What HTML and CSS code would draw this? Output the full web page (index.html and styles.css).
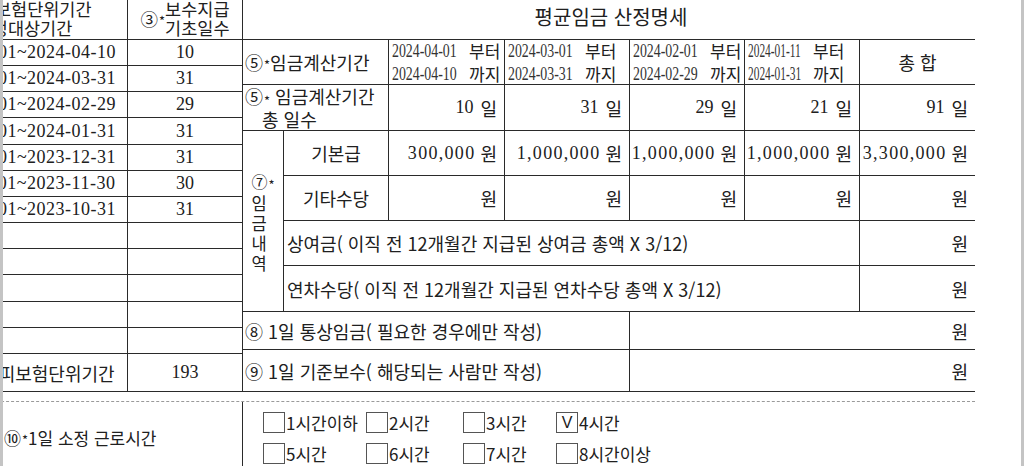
FILE: index.html
```html
<!DOCTYPE html>
<html lang="ko">
<head>
<meta charset="utf-8">
<title>평균임금 산정명세</title>
<link rel="stylesheet" href="styles.css">
</head>
<body>
<div class="viewport">
  <div class="page">
    <div class="top">
      <div class="left">
        <div class="c h col1">② 피보험단위기간<br>산정대상기간</div>
        <div class="c h col2">③<span class="ast">*</span> 보수지급<br>기초일수</div>
        <div class="c col1 num">2024-04-01~2024-04-10</div><div class="c col2 num">10</div>
        <div class="c col1 num">2024-03-01~2024-03-31</div><div class="c col2 num">31</div>
        <div class="c col1 num">2024-02-01~2024-02-29</div><div class="c col2 num">29</div>
        <div class="c col1 num">2024-01-01~2024-01-31</div><div class="c col2 num">31</div>
        <div class="c col1 num">2023-12-01~2023-12-31</div><div class="c col2 num">31</div>
        <div class="c col1 num">2023-11-01~2023-11-30</div><div class="c col2 num">30</div>
        <div class="c col1 num">2023-10-01~2023-10-31</div><div class="c col2 num">31</div>
        <div class="c col1"></div><div class="c col2"></div>
        <div class="c col1"></div><div class="c col2"></div>
        <div class="c col1"></div><div class="c col2"></div>
        <div class="c col1"></div><div class="c col2"></div>
        <div class="c col1"></div><div class="c col2"></div>
        <div class="c col1 tot">④ 통산 피보험단위기간</div><div class="c col2 num">193</div>
      </div>

      <div class="right">
        <div class="c title">평균임금 산정명세</div>

        <div class="c lab span2">⑤<span class="ast">*</span> 임금계산기간</div>
        <div class="c dt"><div class="dl"><span class="d">2024-04-01</span><span>부터</span></div><div class="dl"><span class="d">2024-04-10</span><span>까지</span></div></div>
        <div class="c dt"><div class="dl"><span class="d">2024-03-01</span><span>부터</span></div><div class="dl"><span class="d">2024-03-31</span><span>까지</span></div></div>
        <div class="c dt"><div class="dl"><span class="d">2024-02-01</span><span>부터</span></div><div class="dl"><span class="d">2024-02-29</span><span>까지</span></div></div>
        <div class="c dt narrow"><div class="dl"><span class="d">2024-01-11</span><span>부터</span></div><div class="dl"><span class="d">2024-01-31</span><span>까지</span></div></div>
        <div class="c end ctr">총 합</div>

        <div class="c lab span2 two"><span>⑤<span class="ast">*</span> 임금계산기간</span><span class="ind">총 일수</span></div>
        <div class="c val"><span class="n">10</span> 일</div>
        <div class="c val"><span class="n">31</span> 일</div>
        <div class="c val"><span class="n">29</span> 일</div>
        <div class="c val"><span class="n">21</span> 일</div>
        <div class="c val end"><span class="n">91</span> 일</div>

        <div class="c vert"><span class="vh">⑦<span class="ast">*</span></span><span>임</span><span>금</span><span>내</span><span>역</span></div>
        <div class="c ctr">기본급</div>
        <div class="c val"><span class="n amt">300,000</span> 원</div>
        <div class="c val"><span class="n amt">1,000,000</span> 원</div>
        <div class="c val"><span class="n amt">1,000,000</span> 원</div>
        <div class="c val"><span class="n amt">1,000,000</span> 원</div>
        <div class="c val end"><span class="n amt">3,300,000</span> 원</div>

        <div class="c ctr">기타수당</div>
        <div class="c val">원</div>
        <div class="c val">원</div>
        <div class="c val">원</div>
        <div class="c val">원</div>
        <div class="c val end">원</div>

        <div class="c lab span5 long">상여금( 이직 전 12개월간 지급된 상여금 총액 X 3/12)</div>
        <div class="c val end">원</div>

        <div class="c lab span5 long">연차수당( 이직 전 12개월간 지급된 연차수당 총액 X 3/12)</div>
        <div class="c val end">원</div>

        <div class="c lab span4">⑧ 1일 통상임금( 필요한 경우에만 작성)</div>
        <div class="c val end span3">원</div>

        <div class="c lab span4">⑨ 1일 기준보수( 해당되는 사람만 작성)</div>
        <div class="c val end span3">원</div>
      </div>
    </div>

    <div class="sep"></div>

    <div class="bottom">
      <div class="blab">⑩<span class="ast">*</span>1일 소정 근로시간</div>
      <div class="opts">
        <div class="opt"><span class="box"></span>1시간이하</div>
        <div class="opt"><span class="box"></span>2시간</div>
        <div class="opt"><span class="box"></span>3시간</div>
        <div class="opt"><span class="box">V</span>4시간</div>
        <div class="opt"><span class="box"></span>5시간</div>
        <div class="opt"><span class="box"></span>6시간</div>
        <div class="opt"><span class="box"></span>7시간</div>
        <div class="opt"><span class="box"></span>8시간이상</div>
      </div>
    </div>
  </div>
</div>
</body>
</html>
```

FILE: styles.css
```css
* { box-sizing: border-box; }

html, body {
  margin: 0;
  padding: 0;
  background: #ffffff;
}

body {
  font-family: "Noto Sans CJK KR", "Noto Sans", sans-serif;
  font-size: 18px;
  color: #202020;
  width: 1024px;
  height: 466px;
  overflow: hidden;
}

.viewport {
  width: 1024px;
  height: 466px;
  overflow: hidden;
  border-left: 3px solid #c4c4c4;
  border-right: 3px solid #c4c4c4;
  background: #fff;
}

.page {
  margin-left: -82px;
  width: 1060px;
}

.top {
  display: flex;
}

/* ---------- left table ---------- */
.left {
  display: grid;
  grid-template-columns: 207px 115px;
  grid-template-rows: 40px 26px 26px 26px 27px 26px 26px 26px 26px 26px 27px 26px 26px 38px;
  width: 322px;
}

.c {
  border-right: 1px solid #2a2a2a;
  border-bottom: 1px solid #2a2a2a;
  display: flex;
  align-items: center;
  white-space: nowrap;
  overflow: visible;
}

.left .c {
  justify-content: center;
  text-align: center;
}

.left .h {
  line-height: 19px;
  font-size: 17.5px;
  padding-bottom: 3px;
}

.num {
  font-family: "Liberation Serif", serif;
  font-size: 18px;
}

.left .col1.num {
  letter-spacing: 0.5px;
  padding-right: 4px;
}

.tot {
  padding-left: 4px;
}

.ast {
  font-size: 13px;
  position: relative;
  top: 2px;
  margin-left: 1px;
}

/* ---------- right table ---------- */
.right {
  display: grid;
  grid-template-columns: 41px 105px 116px 125px 115px 115px 115px;
  grid-template-rows: 40px 45px 46px 45px 45px 45px 46px 38px 42px;
  width: 732px;
}

.title {
  grid-column: 1 / -1;
  border-right: none;
  justify-content: center;
  padding-bottom: 6px;
  padding-left: 4px;
  font-size: 20px;
}

.span2 { grid-column: span 2; }
.span3 { grid-column: span 3; }
.span4 { grid-column: span 4; }
.span5 { grid-column: span 5; }

.end { border-right: none; }

.lab {
  padding-left: 2px;
}

.long {
  padding-left: 3px;
}

.two {
  flex-direction: column;
  align-items: flex-start;
  justify-content: center;
  line-height: 20px;
}

.two .ind {
  padding-left: 17px;
}

.ctr {
  justify-content: center;
}

.val {
  justify-content: flex-end;
  padding-right: 7px;
}

.n {
  font-family: "Liberation Serif", serif;
  font-size: 18px;
  margin-right: 7px;
}

.amt {
  letter-spacing: 1.3px;
  margin-right: 5px;
}

.dt {
  flex-direction: column;
  align-items: flex-start;
  justify-content: center;
  padding-left: 3px;
  font-size: 17px;
}

.dl {
  display: flex;
  align-items: center;
  height: 23px;
  gap: 12px;
}

.d {
  display: inline-block;
  width: 65px;
  font-family: "Liberation Serif", serif;
  font-size: 19px;
  transform: scaleX(0.73);
  transform-origin: left center;
  color: #333;
}

.narrow .d {
  width: 53px;
  transform: scaleX(0.6);
}

.vert {
  grid-row: span 4;
  flex-direction: column;
  justify-content: center;
  align-items: center;
  line-height: 20px;
  font-size: 16.5px;
  padding-right: 8px;
  padding-top: 2px;
}

.vert .vh {
  font-size: 16px;
  margin-left: 8px;
}

/* ---------- separator & bottom ---------- */
.sep {
  width: 1054px;
  height: 10px;
  border-bottom: 1px dashed #9a9a9a;
}

.bottom {
  display: flex;
  width: 1054px;
  height: 66px;
}

.blab {
  width: 322px;
  border-right: 1px solid #2a2a2a;
  display: flex;
  align-items: center;
  padding-left: 83px;
  padding-top: 4px;
  font-size: 17px;
}

.opts {
  display: grid;
  grid-template-columns: 103px 97px 93px auto;
  grid-auto-rows: 21px;
  row-gap: 10px;
  padding: 10px 0 0 20px;
  font-size: 17px;
}

.opt {
  display: flex;
  align-items: center;
  white-space: nowrap;
}

.box {
  width: 22px;
  height: 21px;
  border: 1px solid #555;
  margin-right: 1px;
  display: flex;
  align-items: center;
  justify-content: center;
  font-family: "Liberation Sans", sans-serif;
  font-size: 16px;
  line-height: 1;
}
```
